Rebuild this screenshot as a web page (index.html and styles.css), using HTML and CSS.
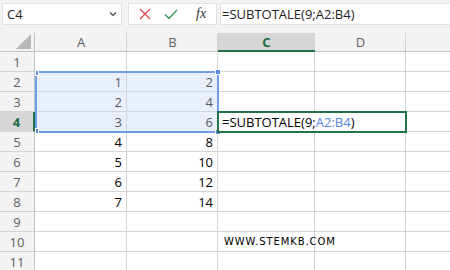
FILE: index.html
```html
<!DOCTYPE html>
<html>
<head>
<meta charset="utf-8">
<link rel="stylesheet" href="styles.css">
</head>
<body>
<div class="toolbar">
  <div class="namebox"><span>C4</span>
    <svg class="chev" width="8" height="6" viewBox="0 0 8 6"><path d="M1 1.5 L4 4.5 L7 1.5" fill="none" stroke="#444" stroke-width="1.2"/></svg>
  </div>
  <div class="btnbox">
    <svg width="12" height="12" viewBox="0 0 12 12"><path d="M1 1 L11 11 M11 1 L1 11" stroke="#e0474c" stroke-width="1.3" fill="none"/></svg>
    <svg width="14" height="11" viewBox="0 0 14 11"><path d="M1 5.5 L5 9.5 L13 1" stroke="#2e9a52" stroke-width="1.3" fill="none"/></svg>
    <span class="fx">fx</span>
  </div>
  <div class="formula">=SUBTOTALE(9;A2:B4)</div>
</div>
<div class="sheet">
  <div class="hdr corner"><svg width="16" height="15" viewBox="0 0 16 15"><polygon points="15,0 15,15 0,15" fill="#b7b7b7"/></svg></div>
  <div class="hdr col">A</div>
  <div class="hdr col">B</div>
  <div class="hdr col active-col">C</div>
  <div class="hdr col">D</div>
  <div class="hdr col last">E</div>

  <div class="hdr row">1</div><div class="c"></div><div class="c"></div><div class="c"></div><div class="c"></div><div class="c last"></div>
  <div class="hdr row">2</div><div class="c n">1</div><div class="c n">2</div><div class="c"></div><div class="c"></div><div class="c last"></div>
  <div class="hdr row">3</div><div class="c n">2</div><div class="c n">4</div><div class="c"></div><div class="c"></div><div class="c last"></div>
  <div class="hdr row active-row">4</div><div class="c n">3</div><div class="c n">6</div><div class="c"></div><div class="c"></div><div class="c last"></div>
  <div class="hdr row">5</div><div class="c n">4</div><div class="c n">8</div><div class="c"></div><div class="c"></div><div class="c last"></div>
  <div class="hdr row">6</div><div class="c n">5</div><div class="c n">10</div><div class="c"></div><div class="c"></div><div class="c last"></div>
  <div class="hdr row">7</div><div class="c n">6</div><div class="c n">12</div><div class="c"></div><div class="c"></div><div class="c last"></div>
  <div class="hdr row">8</div><div class="c n">7</div><div class="c n">14</div><div class="c"></div><div class="c"></div><div class="c last"></div>
  <div class="hdr row">9</div><div class="c"></div><div class="c"></div><div class="c"></div><div class="c"></div><div class="c last"></div>
  <div class="hdr row">10</div><div class="c"></div><div class="c"></div><div class="c site"><span>WWW.STEMKB.COM</span></div><div class="c"></div><div class="c last"></div>
  <div class="hdr row">11</div><div class="c"></div><div class="c"></div><div class="c"></div><div class="c"></div><div class="c last"></div>

  <div class="selection">
    <i class="h tl"></i><i class="h tr"></i><i class="h bl"></i><i class="h br"></i>
  </div>
  <div class="activecell">=SUBTOTALE(9;<span class="ref">A2:B4</span>)</div>
</div>
</body>
</html>
```
FILE: styles.css
```css
* { box-sizing: border-box; }
html, body { margin: 0; padding: 0; }
body {
  width: 450px;
  height: 270px;
  overflow: hidden;
  background: #f3f3f3;
  font-family: "Open Sans", "Noto Sans", sans-serif;
}
.toolbar {
  display: flex;
  align-items: center;
  height: 33px;
  padding: 3px 0 8px 2px;
  gap: 6px;
}
.namebox, .btnbox, .formula {
  background: #fff;
  border: 1px solid #e1e1e1;
  height: 22px;
  display: flex;
  align-items: center;
}
.namebox {
  width: 120px;
  padding: 0 4px 0 4px;
  justify-content: space-between;
  font-size: 13px;
  color: #222;
}
.btnbox {
  width: 89px;
  padding: 0 0 0 10px;
  gap: 13px;
}
.fx {
  font-family: "Liberation Serif", serif;
  font-style: italic;
  font-size: 14px;
  color: #333;
  margin-left: 5px;
}
.formula {
  flex: 1;
  margin-left: -3px;
  border-right: none;
  padding-left: 1px;
  font-size: 13px;
  color: #222;
}
.sheet {
  position: relative;
  display: grid;
  width: 503px;
  grid-template-columns: 35px 92px 91px 97px 91px 97px;
  grid-template-rows: 19px repeat(11, 20px);
  background: #fff;
}
.hdr {
  background: #f3f3f3;
  color: #616161;
  font-size: 13px;
  display: flex;
  align-items: center;
  justify-content: center;
}
.col {
  border-bottom: 1px solid #c4c4c4;
  position: relative;
}
.col::after {
  content: "";
  position: absolute;
  right: 0;
  top: 0;
  bottom: 0;
  width: 1px;
  background: #d4d4d4;
}
.col.last::after { display: none; }
.corner {
  border-bottom: 1px solid #c4c4c4;
  border-right: 1px solid #c4c4c4;
  justify-content: flex-end;
  align-items: flex-end;
  padding: 0 2px 2px 0;
}
.row {
  border-right: 1px solid #c4c4c4;
  border-bottom: 1px solid #d4d4d4;
}
.active-col {
  background: #d6d6d6;
  color: #1e6b41;
  font-weight: bold;
  border-bottom: 2px solid #217346;
}
.active-row {
  background: #d6d6d6;
  color: #1e6b41;
  font-weight: bold;
  border-right: 2px solid #217346;
}
.c {
  border-right: 1px solid #d4d4d4;
  border-bottom: 1px solid #d4d4d4;
  font-size: 13px;
  color: #000;
  display: flex;
  align-items: flex-end;
  padding: 0 4px 1px 4px;
  line-height: 16px;
}
.c.last { border-right: none; }
.n { justify-content: flex-end; }
.site { overflow: visible; white-space: nowrap; }
.site span {
  font-family: "DejaVu Sans", Verdana, sans-serif;
  font-size: 10px;
  letter-spacing: 0.9px;
  padding-left: 2px;
}
.selection {
  position: absolute;
  left: 35px;
  top: 38px;
  width: 184px;
  height: 62px;
  border: 2px solid #6f9cec;
  background: rgba(200, 216, 245, 0.4);
  pointer-events: none;
}
.h {
  position: absolute;
  background: #5b8de6;
  border: 1px solid #fff;
}
.h.tl { left: -2px; top: -3px; width: 4px; height: 6px; }
.h.tr { right: -4px; top: -4px; width: 6px; height: 6px; }
.h.bl { left: -2px; bottom: -3px; width: 4px; height: 6px; }
.h.br { right: -4px; bottom: -4px; width: 6px; height: 6px; }
.activecell {
  position: absolute;
  left: 217px;
  top: 78px;
  width: 190px;
  height: 22px;
  border: 2px solid #217346;
  background: #fff;
  font-size: 13px;
  color: #000;
  padding: 1px 0 0 3px;
  line-height: 17px;
  white-space: nowrap;
}
.ref { color: #4f84e3; }
```
